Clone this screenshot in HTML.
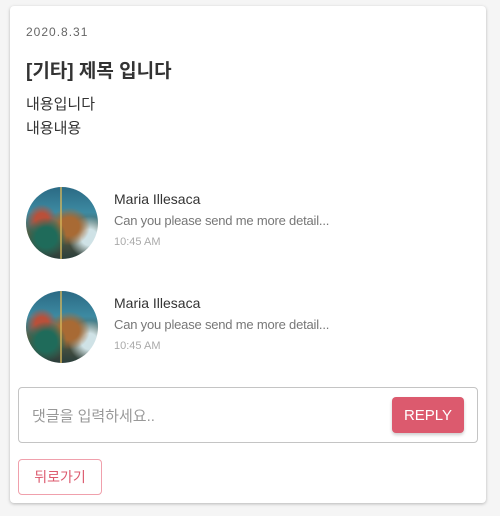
<!DOCTYPE html>
<html><head><meta charset="utf-8"><style>
body{margin:0;width:500px;height:516px;background:#f5f5f5;font-family:"Liberation Sans","Noto Sans CJK KR",sans-serif;position:relative;overflow:hidden}
.card{position:absolute;left:10px;top:6px;width:476px;height:497px;background:#fff;border-radius:4px;box-shadow:0 1px 3px rgba(0,0,0,.25)}
.abs{position:absolute;white-space:nowrap}
.av{position:absolute;left:16px;width:72px;height:72px;border-radius:50%;overflow:hidden;
background:radial-gradient(ellipse at 28% 70%,#1f6b5a 0 14%,transparent 28%),radial-gradient(ellipse at 60% 55%,#a86a34 0 16%,transparent 34%),radial-gradient(circle at 22% 45%,#b9503a 0 9%,transparent 22%),radial-gradient(circle at 88% 70%,#cfe2e6 0 10%,transparent 26%),linear-gradient(180deg,#2b6a84 0%,#3d8aa2 35%,#5a5a40 65%,#2a3e3c 100%)}
.av::after{content:"";position:absolute;left:34px;top:0;width:2px;height:72px;background:rgba(214,181,90,.7)}
</style></head><body>
<div class="card">
<div class="abs" style="left:16px;top:19px;font-size:12px;color:#666;letter-spacing:1px">2020.8.31</div>
<div class="abs" style="left:16px;top:50px;font-size:19px;font-weight:bold;color:#333">[기타] 제목 입니다</div>
<div class="abs" style="left:16px;top:87px;font-size:15px;color:#333;line-height:24px">내용입니다<br>내용내용</div>

<div class="av" style="top:181px"></div>
<div class="abs" style="left:104px;top:185px;font-size:14px;color:#333">Maria Illesaca</div>
<div class="abs" style="left:104px;top:207px;font-size:13px;color:#777;letter-spacing:-0.2px">Can you please send me more detail...</div>
<div class="abs" style="left:104px;top:230px;font-size:11px;color:#aaa">10:45 AM</div>

<div class="av" style="top:285px"></div>
<div class="abs" style="left:104px;top:289px;font-size:14px;color:#333">Maria Illesaca</div>
<div class="abs" style="left:104px;top:311px;font-size:13px;color:#777;letter-spacing:-0.2px">Can you please send me more detail...</div>
<div class="abs" style="left:104px;top:334px;font-size:11px;color:#aaa">10:45 AM</div>

<div style="position:absolute;left:8px;top:381px;width:458px;height:54px;border:1px solid #c4c4c4;border-radius:4px"></div>
<div class="abs" style="left:22px;top:399px;font-size:15px;color:#999">댓글을 입력하세요..</div>
<div style="position:absolute;left:382px;top:391px;width:72px;height:36px;background:#dc5a6e;border-radius:4px;box-shadow:0 2px 3px rgba(0,0,0,.2);color:#fff;font-size:15px;text-align:center;line-height:38px">REPLY</div>

<div style="position:absolute;left:8px;top:453px;width:82px;height:34px;border:1px solid #f0a0ac;border-radius:4px;color:#dc5a6e;font-size:14px;text-align:center;line-height:35px">뒤로가기</div>
</div>
</body></html>
